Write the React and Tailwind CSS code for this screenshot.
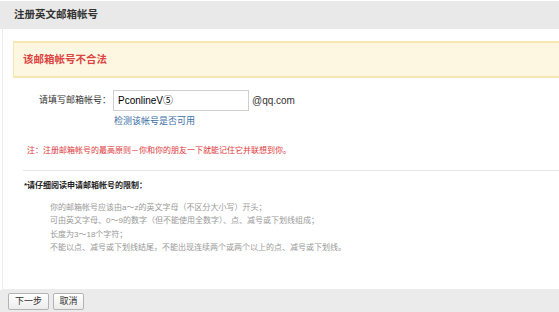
import React from 'react';

const rules = [
  '你的邮箱帐号应该由a～z的英文字母（不区分大小写）开头；',
  '可由英文字母、0～9的数字（但不能使用全数字）、点、减号或下划线组成；',
  '长度为3～18个字符；',
  '不能以点、减号或下划线结尾，不能出现连续两个或两个以上的点、减号或下划线。'
];

const Button = ({ children, width }) => (
  <button
    className={`${width} h-[17px] border border-[#b3b3b3] rounded-[2px] bg-gradient-to-b from-white to-[#ececec] text-[9px] text-[#333] leading-none`}
  >
    {children}
  </button>
);

export default function App() {
  return (
    <div className="w-[559px] h-[312px] bg-white flex flex-col overflow-hidden font-['Liberation_Sans','Noto_Sans_CJK_SC',sans-serif]">
      {/* Header */}
      <div className="h-px bg-white" />
      <div className="h-[28px] bg-[#e9e9e9] flex items-center pl-[14px] text-[10.5px] font-bold text-[#333]">
        注册英文邮箱帐号
      </div>

      {/* Body */}
      <div className="flex-1 ml-[2px] border-l border-b border-[#ececec] pl-[10px] pt-[12px]">
        <div className="h-[37px] bg-[#fdf7e1] border-l border-y-2 border-[#f7e5b2] flex items-center pl-[9px] text-[10.5px] font-semibold text-[#dc4444]">
          该邮箱帐号不合法
        </div>

        {/* Account row */}
        <div className="mt-[12px] flex items-center pl-[26px]">
          <span className="text-[9px] text-[#333] w-[74px]">请填写邮箱帐号：</span>
          <div className="w-[136px] h-[21px] border border-[#cfcfcf] flex items-center pl-[4px] text-[10px] text-black">
            PconlineV⑤
          </div>
          <span className="ml-[3px] text-[10px] text-[#333]">@qq.com</span>
        </div>
        <div className="mt-[4px] pl-[101px] text-[9px] leading-[12px] text-[#3b6ea6]">检测该帐号是否可用</div>

        <div className="mt-[18px] pl-[14px] text-[8px] leading-[11px] text-[#e0383c]">
          注：注册邮箱帐号的最高原则－你和你的朋友一下就能记住它并联想到你。
        </div>

        <div className="mt-[14px] ml-[10px] border-t border-[#e6e6e6]" />

        <div className="mt-[9px] ml-[11px] text-[8px] leading-[11px] font-bold text-[#222]">
          *请仔细阅读申请邮箱帐号的限制：
        </div>
        <div className="mt-[10px] ml-[37px] text-[8px] leading-[13.3px] text-[#999]">
          {rules.map((r) => (
            <div key={r}>{r}</div>
          ))}
        </div>
      </div>

      {/* Footer */}
      <div className="h-[22px] bg-[#ebebeb] flex items-start gap-[4px] pl-[8px] pt-[3px]">
        <Button width="w-[41px]">下一步</Button>
        <Button width="w-[31px]">取消</Button>
      </div>
    </div>
  );
}
